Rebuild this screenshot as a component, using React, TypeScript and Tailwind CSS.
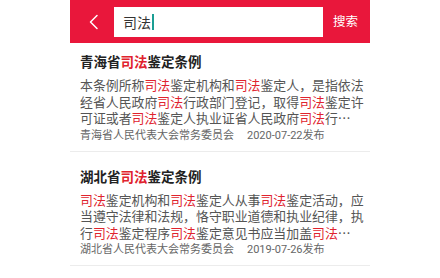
const FONT = '"Noto Sans CJK SC", "Noto Sans", sans-serif';
const META_FONT = 'Roboto, "Noto Sans CJK SC", sans-serif';

function Hl({ children }: { children: string }) {
  return <span className="text-[#e0232e]">{children}</span>;
}

// render a line where every "司法" is highlighted
function Line({ text }: { text: string }) {
  const parts = text.split("司法");
  return (
    <div className="h-[16.5px] leading-[16.5px] whitespace-nowrap">
      {parts.map((p, i) => (
        <span key={i}>
          {p}
          {i < parts.length - 1 && <Hl>司法</Hl>}
        </span>
      ))}
    </div>
  );
}

interface Item {
  title: [string, string];
  lines: string[];
  org: string;
  date: string;
  pt: string;
}

const items: Item[] = [
  {
    title: ["青海省", "鉴定条例"],
    lines: [
      "本条例所称司法鉴定机构和司法鉴定人，是指依法",
      "经省人民政府司法行政部门登记，取得司法鉴定许",
      "可证或者司法鉴定人执业证省人民政府司法行…",
    ],
    org: "青海省人民代表大会常务委员会",
    date: "2020-07-22发布",
    pt: "pt-[9px]",
  },
  {
    title: ["湖北省", "鉴定条例"],
    lines: [
      "司法鉴定机构和司法鉴定人从事司法鉴定活动，应",
      "当遵守法律和法规，恪守职业道德和执业纪律，执",
      "行司法鉴定程序司法鉴定意见书应当加盖司法…",
    ],
    org: "湖北省人民代表大会常务委员会",
    date: "2019-07-26发布",
    pt: "pt-[15px]",
  },
];

export default function App() {
  return (
    <div
      className="w-[440px] h-[278px] bg-white flex justify-center overflow-hidden"
      style={{ fontFamily: FONT }}
    >
      <div className="w-[300px] flex flex-col">
        <div className="h-[43px] bg-[#e9173b] flex items-center shrink-0">
          <div className="w-[44px] flex justify-center pl-[1px]">
            <svg width="12" height="16" viewBox="0 0 12 16" fill="none">
              <path
                d="M10 1.5L3.5 8l6.5 6.5"
                stroke="white"
                strokeWidth="1.5"
                strokeLinecap="round"
                strokeLinejoin="round"
              />
            </svg>
          </div>
          <div className="w-[209px] h-[30px] bg-white flex items-center pl-[9px]">
            <span className="text-[14px] text-[#333] leading-none">司法</span>
            <span className="w-[1.5px] h-[16px] bg-[#1a9e94] ml-[1px]" />
          </div>
          <div className="flex-1 text-center text-white text-[12.5px] pr-[2px]">
            搜索
          </div>
        </div>

        {items.map((it, idx) => (
          <div
            key={idx}
            className={`${it.pt} pb-[7px] pl-[10px] pr-[5px] border-b border-[#ececec]`}
          >
            <div className="h-[18px] text-[13.5px] leading-[18px] font-bold text-[#222]">
              {it.title[0]}
              <Hl>司法</Hl>
              {it.title[1]}
            </div>
            <div className="mt-[7px] text-[12.9px] text-[#555]">
              {it.lines.map((l, i) => (
                <Line key={i} text={l} />
              ))}
            </div>
            <div
              className="mt-[1px] h-[16px] flex items-center text-[11px] leading-[16px] text-[#666]"
              style={{ fontFamily: META_FONT }}
            >
              <span>{it.org}</span>
              <span className="ml-[13px]">{it.date}</span>
            </div>
          </div>
        ))}
      </div>
    </div>
  );
}
